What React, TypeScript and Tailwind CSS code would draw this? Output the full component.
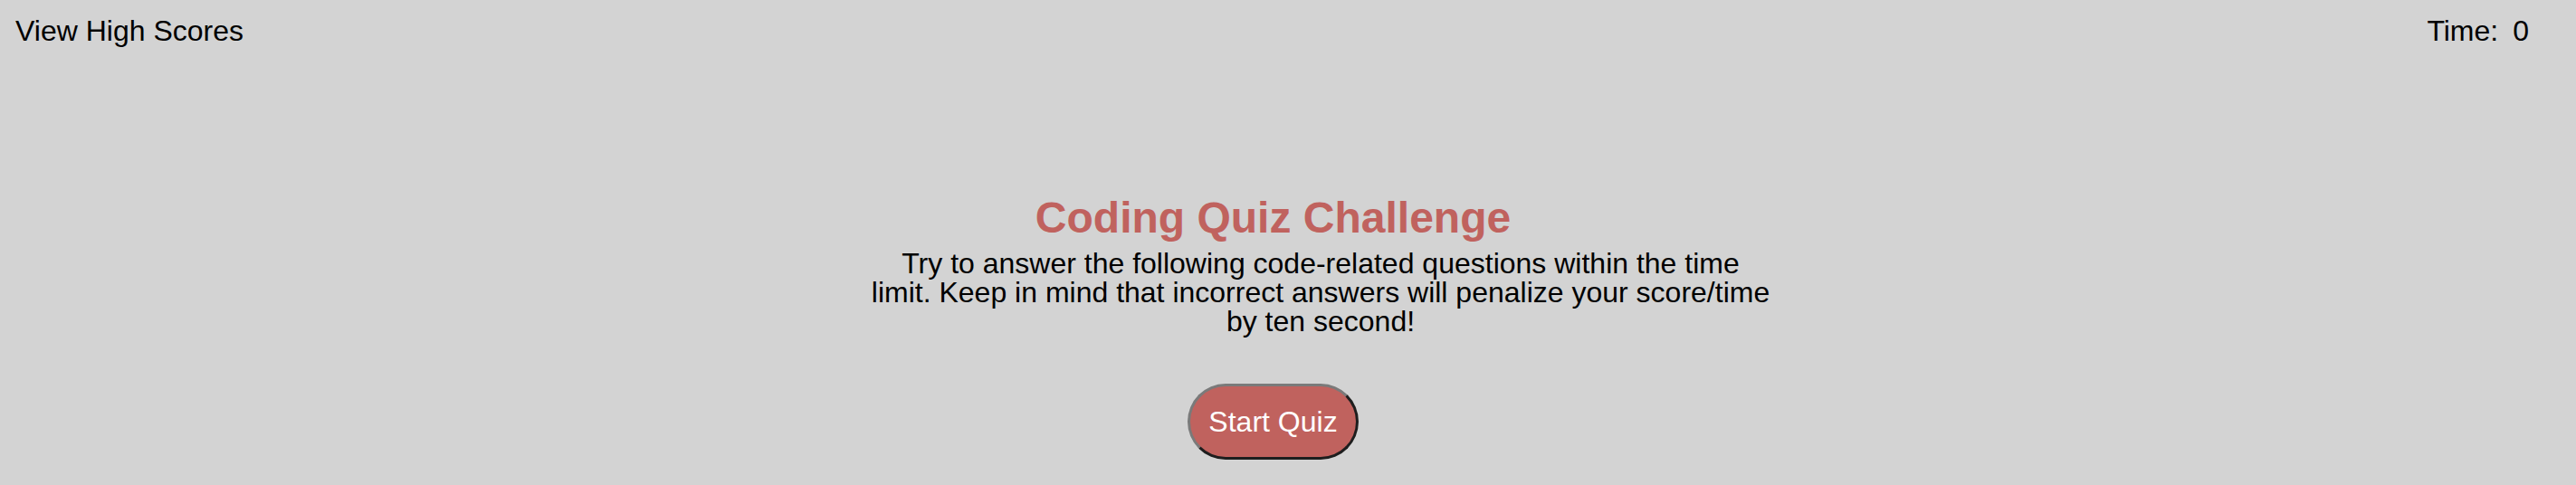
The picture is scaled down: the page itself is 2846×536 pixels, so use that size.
export default function App() {
  return (
    <div className="min-h-[536px] bg-[#d3d3d3] font-['Liberation_Sans',Arial,sans-serif] text-black">
      <header className="flex justify-between pl-[17px] pr-[52px] pt-[18px] text-[32px] leading-[32px]">
        <a className="cursor-pointer">View High Scores</a>
        <div className="flex">
          <span>Time:</span>
          <span className="ml-[16px]">0</span>
        </div>
      </header>

      <main className="flex flex-col items-center pr-[33px] pt-[167px]">
        <h1 className="text-[48px] leading-[48px] font-bold text-[#c0625e]">Coding Quiz Challenge</h1>
        <p className="ml-[105px] mt-[10px] w-[996px] text-center text-[32px] leading-[32px]">
          Try to answer the following code-related questions within the time limit. Keep in mind that incorrect answers will penalize your score/time by ten second!
        </p>
        <button className="mt-[53px] rounded-full border-[3px] border-t-[#7a7a7a] border-l-[#7a7a7a] border-r-[#1e1e1e] border-b-[#1e1e1e] bg-[#c0625e] px-[20px] py-[20px] text-[32px] leading-[38px] text-white">
          Start Quiz
        </button>
      </main>
    </div>
  )
}
